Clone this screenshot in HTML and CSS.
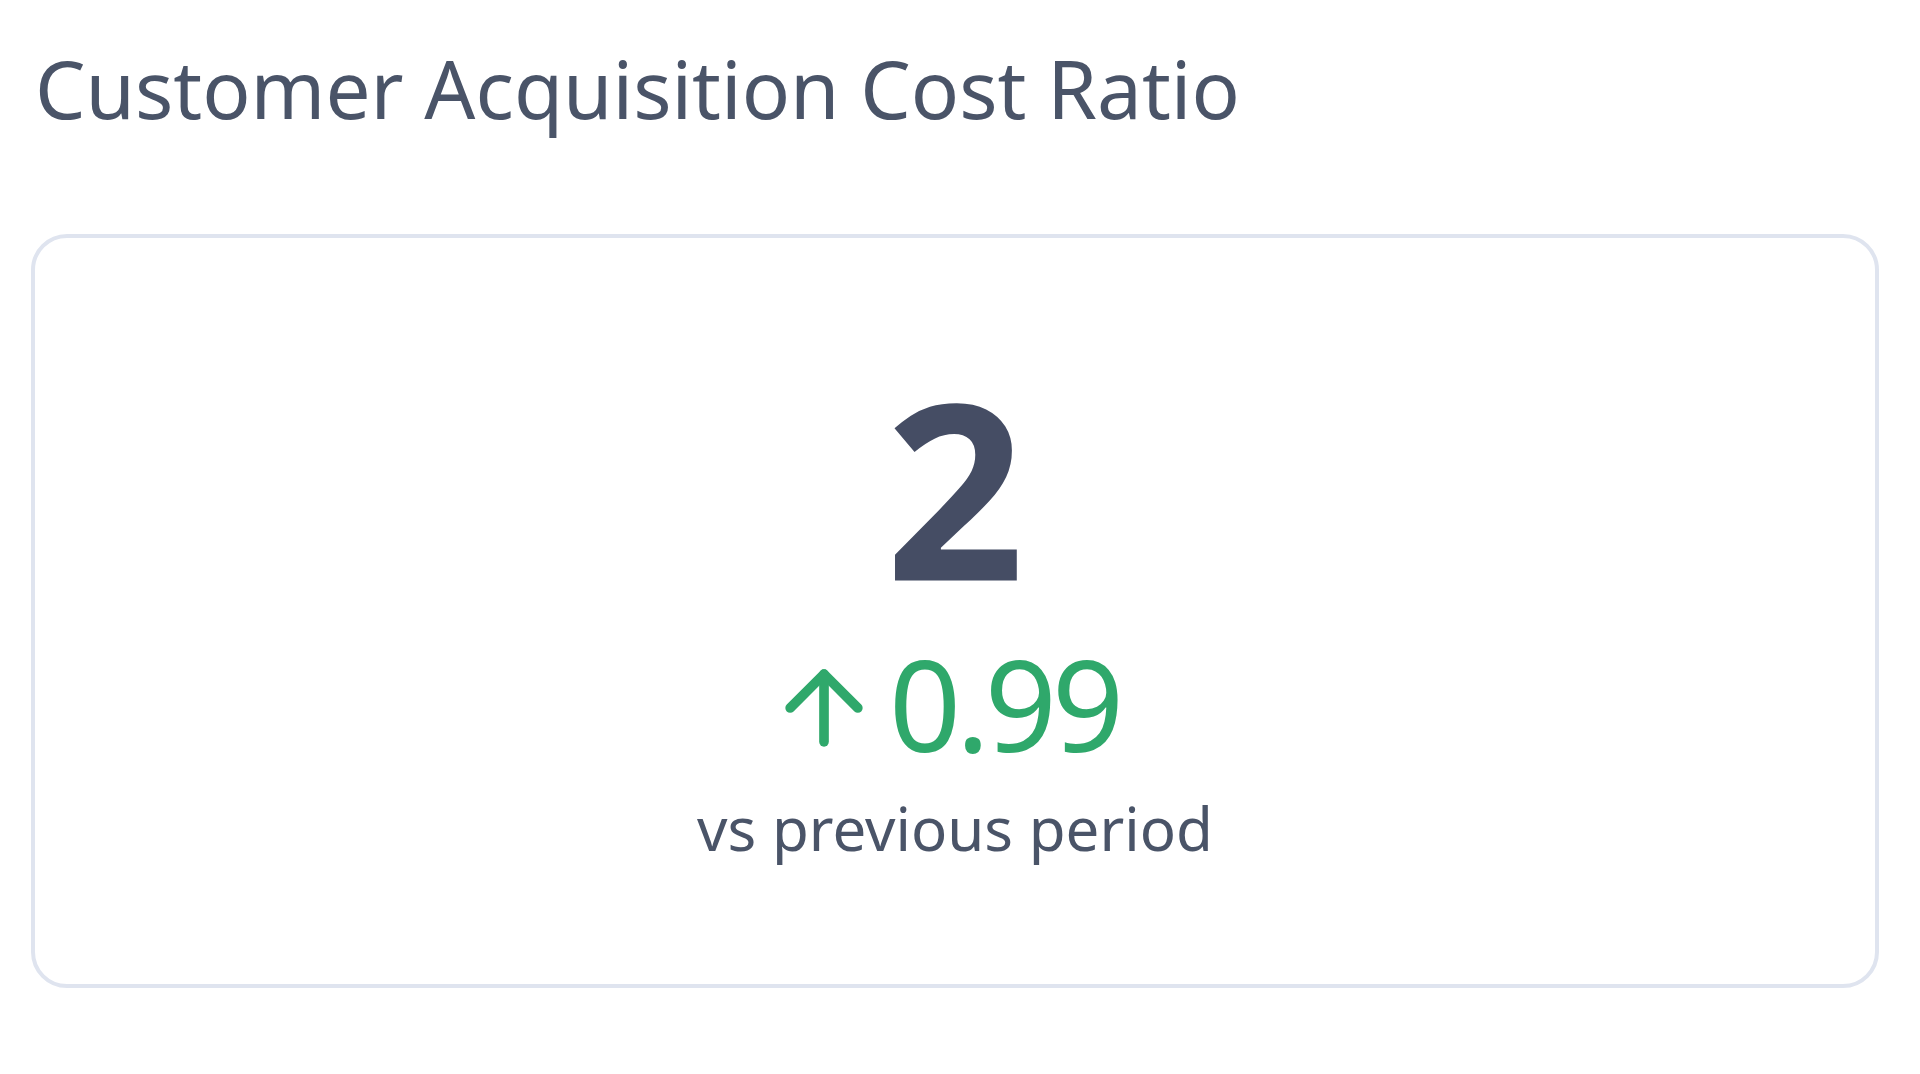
FILE: index.html
```html
<!DOCTYPE html>
<html lang="en">
<head>
<meta charset="utf-8">
<title>Customer Acquisition Cost Ratio</title>
<link rel="stylesheet" href="styles.css">
</head>
<body>
<div class="widget">
  <h2 class="widget-title">Customer Acquisition Cost Ratio</h2>
  <div class="card">
    <div class="metric-value">2</div>
    <div class="metric-delta">
      <svg class="delta-icon" viewBox="0 0 24 24" fill="none" stroke="currentColor" stroke-width="2" stroke-linecap="round" stroke-linejoin="round"><line x1="12" y1="19" x2="12" y2="5"/><polyline points="5 12 12 5 19 12"/></svg>
      <span class="delta-text">0.99</span>
    </div>
    <div class="metric-caption">vs previous period</div>
  </div>
</div>
</body>
</html>
```

FILE: styles.css
```css
html, body {
  margin: 0;
  padding: 0;
  background: #ffffff;
}

body {
  font-family: "Noto Sans", "Open Sans", "Liberation Sans", sans-serif;
  color: #4a5568;
}

.widget {
  padding: 28px 41px 0 31px;
}

.widget-title {
  margin: 0 0 0 4px;
  font-size: 80px;
  font-weight: 400;
  line-height: 120px;
  color: #4a5468;
}

.card {
  margin-top: 86px;
  border: 4px solid #dfe4ef;
  border-radius: 36px;
  padding: 125px 0 126px;
  display: flex;
  flex-direction: column;
  align-items: center;
}

.metric-value {
  font-size: 244px;
  font-weight: 700;
  line-height: 1;
  color: #454d64;
}

.metric-delta {
  margin-top: 33px;
  margin-right: 25px;
  display: flex;
  align-items: flex-end;
  gap: 7px;
  color: #2fa86b;
  font-size: 126px;
  line-height: 1;
}

.delta-icon {
  width: 116px;
  height: 116px;
  flex: none;
}

.delta-text {
  display: block;
  letter-spacing: -5px;
}

.metric-caption {
  margin-top: 32px;
  font-size: 60px;
  line-height: 1;
  color: #4a5468;
}
```
